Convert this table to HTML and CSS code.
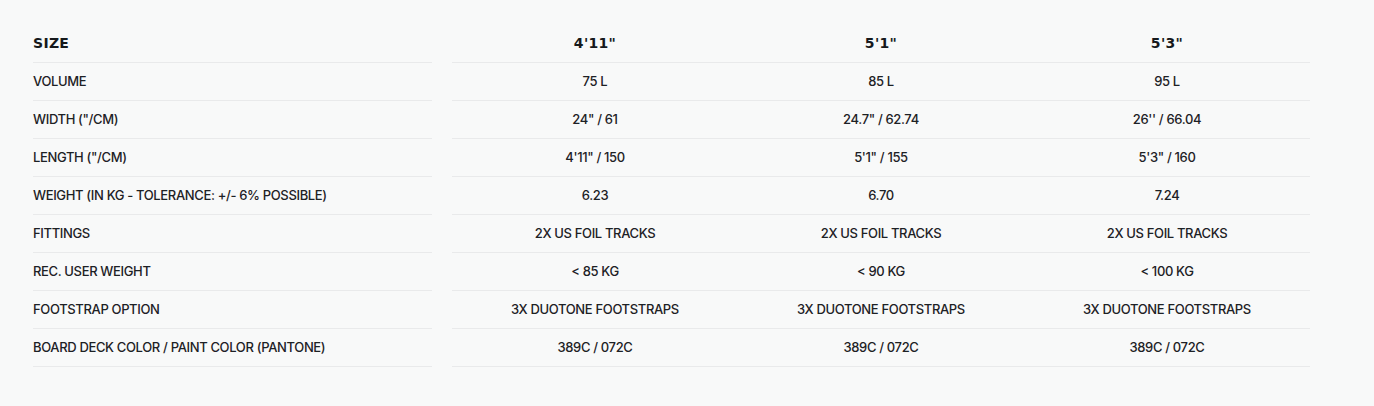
FILE: index.html
```html
<!DOCTYPE html>
<html lang="en">
<head>
<meta charset="utf-8">
<title>Specs</title>
<link rel="stylesheet" href="styles.css">
</head>
<body>
<div class="specs">
  <div class="row head">
    <div class="label">SIZE</div>
    <div class="vals"><div>4'11"</div><div>5'1"</div><div>5'3"</div></div>
  </div>
  <div class="row">
    <div class="label">VOLUME</div>
    <div class="vals"><div>75 L</div><div>85 L</div><div>95 L</div></div>
  </div>
  <div class="row">
    <div class="label">WIDTH ("/CM)</div>
    <div class="vals"><div>24" / 61</div><div>24.7" / 62.74</div><div>26'' / 66.04</div></div>
  </div>
  <div class="row">
    <div class="label">LENGTH ("/CM)</div>
    <div class="vals"><div>4'11" / 150</div><div>5'1" / 155</div><div>5'3" / 160</div></div>
  </div>
  <div class="row">
    <div class="label">WEIGHT (IN KG - TOLERANCE: +/- 6% POSSIBLE)</div>
    <div class="vals"><div>6.23</div><div>6.70</div><div>7.24</div></div>
  </div>
  <div class="row">
    <div class="label">FITTINGS</div>
    <div class="vals"><div>2X US FOIL TRACKS</div><div>2X US FOIL TRACKS</div><div>2X US FOIL TRACKS</div></div>
  </div>
  <div class="row">
    <div class="label">REC. USER WEIGHT</div>
    <div class="vals"><div>&lt; 85 KG</div><div>&lt; 90 KG</div><div>&lt; 100 KG</div></div>
  </div>
  <div class="row">
    <div class="label">FOOTSTRAP OPTION</div>
    <div class="vals"><div>3X DUOTONE FOOTSTRAPS</div><div>3X DUOTONE FOOTSTRAPS</div><div>3X DUOTONE FOOTSTRAPS</div></div>
  </div>
  <div class="row">
    <div class="label">BOARD DECK COLOR / PAINT COLOR (PANTONE)</div>
    <div class="vals"><div>389C / 072C</div><div>389C / 072C</div><div>389C / 072C</div></div>
  </div>
</div>
</body>
</html>
```

FILE: styles.css
```css
html, body {
  margin: 0;
  padding: 0;
  background: #f8f9f9;
}
body {
  font-family: "Inter", "Liberation Sans", sans-serif;
  font-size: 13px;
  font-weight: 500;
  color: #1d2125;
}
.specs {
  padding: 25px 0 0 33px;
}
.row {
  display: grid;
  grid-template-columns: 399px 858px;
  column-gap: 20px;
}
.label, .vals {
  box-sizing: border-box;
  height: 38px;
  padding-bottom: 2px;
  border-bottom: 1px solid #e9eaeb;
}
.label {
  display: flex;
  align-items: center;
  letter-spacing: -0.35px;
}
.vals {
  display: grid;
  grid-template-columns: repeat(3, 1fr);
  align-items: center;
  text-align: center;
  letter-spacing: -0.35px;
}
.head .label, .head .vals {
  font-family: "DejaVu Sans", sans-serif;
  font-weight: bold;
  font-size: 14px;
  letter-spacing: 0.3px;
  color: #16191c;
}
```
